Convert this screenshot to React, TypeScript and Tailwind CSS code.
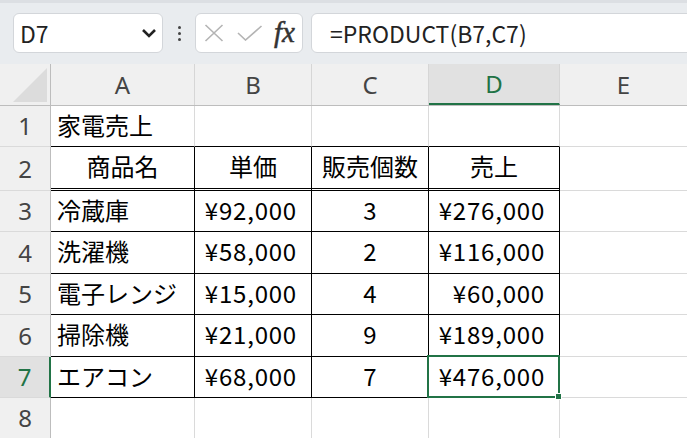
import React from 'react';

const jp = { fontFamily: '"Noto Sans CJK JP", "Noto Sans", sans-serif' };
const hd = { fontFamily: '"Noto Sans", "Liberation Sans", sans-serif' };

type Row = {
  n: number;
  h: string;
  cells: string[];
  kind: 'title' | 'head' | 'body' | 'empty';
};

const rows: Row[] = [
  { n: 1, h: 'h-[41px]', kind: 'title', cells: ['家電売上', '', '', ''] },
  { n: 2, h: 'h-[44px]', kind: 'head', cells: ['商品名', '単価', '販売個数', '売上'] },
  { n: 3, h: 'h-[41px]', kind: 'body', cells: ['冷蔵庫', '¥92,000', '3', '¥276,000'] },
  { n: 4, h: 'h-[42px]', kind: 'body', cells: ['洗濯機', '¥58,000', '2', '¥116,000'] },
  { n: 5, h: 'h-[41px]', kind: 'body', cells: ['電子レンジ', '¥15,000', '4', '¥60,000'] },
  { n: 6, h: 'h-[42px]', kind: 'body', cells: ['掃除機', '¥21,000', '9', '¥189,000'] },
  { n: 7, h: 'h-[41px]', kind: 'body', cells: ['エアコン', '¥68,000', '7', '¥476,000'] },
  { n: 8, h: 'h-[41px]', kind: 'empty', cells: ['', '', '', ''] },
];

const widths = ['w-[144px]', 'w-[117px]', 'w-[117px]', 'w-[131px]'];
const letters = ['A', 'B', 'C', 'D', 'E'];

const Toolbar = () => (
  <div className="flex h-[64px] items-start border-t-[3px] border-[#dcdfe3] bg-[#e9ecef] pt-[10px]">
    <div className="ml-[13px] flex h-[40px] w-[150px] items-center justify-between rounded-[6px] border border-[#d3d6da] bg-white pl-[6px] pr-[5px]">
      <span className="text-[23px] text-[#222]" style={jp}>D7</span>
      <svg width="16" height="10" viewBox="0 0 16 10">
        <polyline points="2,2 8,8 14,2" fill="none" stroke="#222" strokeWidth="2.6" />
      </svg>
    </div>
    <div className="flex h-[40px] w-[32px] flex-col items-center justify-center gap-[3px]">
      <span className="h-[3px] w-[3px] rounded-full bg-[#444]" />
      <span className="h-[3px] w-[3px] rounded-full bg-[#444]" />
      <span className="h-[3px] w-[3px] rounded-full bg-[#444]" />
    </div>
    <div className="flex h-[40px] w-[108px] items-center rounded-[6px] border border-[#d3d6da] bg-white pl-[8px]">
      <svg width="20" height="18" viewBox="0 0 20 18">
        <path d="M1.5 1 L18.5 17 M18.5 1 L1.5 17" stroke="#b4b4b4" strokeWidth="1.6" />
      </svg>
      <svg className="ml-[13px]" width="26" height="16" viewBox="0 0 26 16">
        <polyline points="1,8 8.5,15 24.5,1" fill="none" stroke="#b4b4b4" strokeWidth="1.6" />
      </svg>
      <span
        className="ml-[11px] -mt-[2px] text-[29px] italic leading-none text-[#333]"
        style={{ fontFamily: '"Liberation Serif", "DejaVu Serif", serif', WebkitTextStroke: '0.5px #333' }}
      >
        fx
      </span>
    </div>
    <div className="-mr-[10px] ml-[8px] flex h-[40px] flex-1 items-center rounded-[6px] border border-[#d3d6da] bg-white pl-[18px]">
      <span className="text-[23px] text-[#222]" style={jp}>=PRODUCT(B7,C7)</span>
    </div>
  </div>
);

const HeaderRow = () => (
  <div className="flex h-[42px] border-b border-[#bdbdbd] bg-[#f0f0f0]">
    <div className="flex w-[51px] shrink-0 items-end justify-start border-r border-[#bdbdbd]">
      <svg width="50" height="41" viewBox="0 0 50 41">
        <polygon points="13,38 47,38 47,4" fill="#dcdcdc" />
      </svg>
    </div>
    {letters.map((l, i) => {
      const sel = l === 'D';
      return (
        <div
          key={l}
          className={
            (i < 4 ? widths[i] + ' shrink-0 border-r border-[#d6d6d6] ' : 'flex-1 ') +
            'flex items-center justify-center text-[24px] ' +
            (sel ? 'border-b-2 border-b-[#217346] bg-[#e1e1e1] text-[#217346]' : 'text-[#444]')
          }
          style={hd}
        >
          {l}
        </div>
      );
    })}
  </div>
);

const cellClass = (r: Row, i: number) => {
  let c = widths[i] + ' shrink-0 flex items-center pb-[3px] text-[24px] text-black ';
  if (r.kind === 'title') c += 'border-r border-r-[#dadada] border-b border-b-black ';
  else if (r.kind === 'head') c += 'border-r border-r-black border-b-[3px] border-double border-b-black ';
  else if (r.kind === 'body') c += 'border-r border-r-black border-b border-b-black ';
  else c += 'border-r border-r-[#dadada] border-b border-b-[#dadada] ';
  if (r.kind === 'head' || i === 2) c += 'justify-center ';
  else if (i === 0) c += 'justify-start pl-[6px] ';
  else c += 'justify-end pr-[14px] tracking-[0.8px] ';
  return c;
};

const SheetRow = ({ r }: { r: Row }) => {
  const sel = r.n === 7;
  return (
    <div className={'flex ' + r.h}>
      <div
        className={
          'flex w-[51px] shrink-0 items-center justify-center border-b border-b-[#dadada] text-[24px] ' +
          (sel
            ? 'border-r-2 border-r-[#217346] bg-[#e1e1e1] text-[#217346]'
            : 'border-r border-r-[#bdbdbd] bg-[#f0f0f0] text-[#444]')
        }
        style={hd}
      >
        {r.n}
      </div>
      {r.cells.map((t, i) => (
        <div key={i} className={cellClass(r, i) + (sel && i === 3 ? 'relative' : '')} style={jp}>
          {t}
          {sel && i === 3 && (
            <>
              <div className="pointer-events-none absolute -left-[2px] -top-[2px] -bottom-[1px] -right-[1px] border-2 border-[#217346]" />
              <div className="absolute -bottom-[3px] -right-[3px] h-[7px] w-[7px] border border-white bg-[#217346]" />
            </>
          )}
        </div>
      ))}
      <div className="flex-1 border-b border-b-[#dadada]" />
    </div>
  );
};

export default function App() {
  return (
    <div className="h-[438px] w-[687px] overflow-hidden bg-white">
      <Toolbar />
      <HeaderRow />
      {rows.map((r) => (
        <SheetRow key={r.n} r={r} />
      ))}
    </div>
  );
}
